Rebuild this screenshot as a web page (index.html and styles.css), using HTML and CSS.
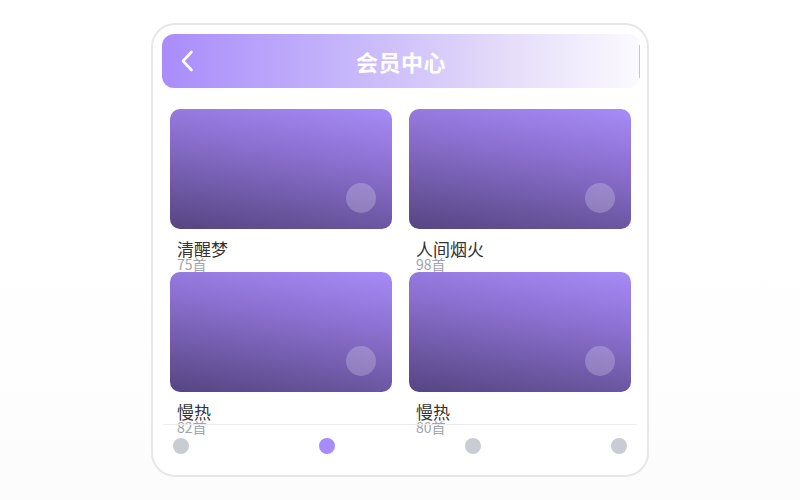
FILE: index.html
```
<html>
    <head>
        <meta charset="utf-8">
        <title>会员中心</title>
        <link rel="stylesheet" href="styles.css">
    </head>
    <body>
        <div class="phone">
            <div class="header">
                <svg class="back" width="14" height="22" viewBox="0 0 14 22">
                    <path d="M10.5 2 L2 11 L10.5 20" fill="none" stroke="#fff" stroke-width="2.6" stroke-linecap="round" stroke-linejoin="round"/>
                </svg>
                <div class="title">会员中心</div>
            </div>

            <div class="grid">
                <div class="item">
                    <div class="cover"><span class="play"></span></div>
                    <div class="name">清醒梦</div>
                    <div class="count">75首</div>
                </div>
                <div class="item">
                    <div class="cover"><span class="play"></span></div>
                    <div class="name">人间烟火</div>
                    <div class="count">98首</div>
                </div>
                <div class="item">
                    <div class="cover"><span class="play"></span></div>
                    <div class="name">慢热</div>
                    <div class="count">82首</div>
                </div>
                <div class="item">
                    <div class="cover"><span class="play"></span></div>
                    <div class="name">慢热</div>
                    <div class="count">80首</div>
                </div>
            </div>

            <div class="tabbar">
                <span class="dot"></span>
                <span class="dot active"></span>
                <span class="dot"></span>
                <span class="dot"></span>
            </div>
        </div>
    </body>
</html>
```

FILE: styles.css
```
body {
    margin: 0;
    height: 500px;
    display: flex;
    justify-content: center;
    align-items: flex-start;
    background: linear-gradient(180deg, #ffffff 0%, #ffffff 50%, #fcfcfd 100%);
    font-family: "Noto Sans CJK SC", "Noto Sans", sans-serif;
}
.phone {
    position: relative;
    box-sizing: border-box;
    width: 498px;
    height: 454px;
    margin-top: 23px;
    border: 2px solid #e7e7eb;
    border-radius: 24px;
    background: #fff;
    padding: 9px 7px 0 9px;
    overflow: hidden;
}
.header {
    position: relative;
    height: 54px;
    border-radius: 12px;
    background: linear-gradient(90deg, #a98cfa 0%, #c7b7fb 40%, #e3daf9 70%, #fbfaff 100%);
    display: flex;
    align-items: center;
    justify-content: center;
}
/* thin edge on the right side of the bar */
.header::after {
    content: "";
    position: absolute;
    right: 0;
    top: 11px;
    bottom: 10px;
    width: 1px;
    background: #c9bff5;
}
.back {
    position: absolute;
    left: 19px;
    top: 16px;
}
.title {
    color: #fff;
    font-size: 22px;
    font-weight: bold;
    letter-spacing: 0.5px;
}
.grid {
    display: grid;
    grid-template-columns: 222px 222px;
    grid-auto-rows: 163px;
    column-gap: 17px;
    margin-top: 21px;
    padding-left: 8px;
}
.cover {
    position: relative;
    height: 120px;
    border-radius: 10px;
    background: linear-gradient(190deg, #a78bf8 0%, #8a6fce 40%, #554581 100%);
}
.play {
    position: absolute;
    right: 16px;
    bottom: 16px;
    width: 30px;
    height: 30px;
    border-radius: 50%;
    background: rgba(255, 255, 255, 0.22);
}
.name {
    margin-top: 10px;
    padding-left: 7px;
    font-size: 17px;
    line-height: 19px;
    color: #333;
}
.count {
    padding-left: 7px;
    font-size: 14px;
    line-height: 13px;
    color: #a0a4ab;
}
.tabbar {
    position: absolute;
    left: 10px;
    right: 10px;
    top: 399px;
    border-top: 1px solid #ececf0;
    display: flex;
    justify-content: space-between;
    padding: 13px 10px 0 10px;
}
.dot {
    width: 16px;
    height: 16px;
    border-radius: 50%;
    background: #c9cdd3;
}
.dot.active {
    background: #a78bfa;
}
```
